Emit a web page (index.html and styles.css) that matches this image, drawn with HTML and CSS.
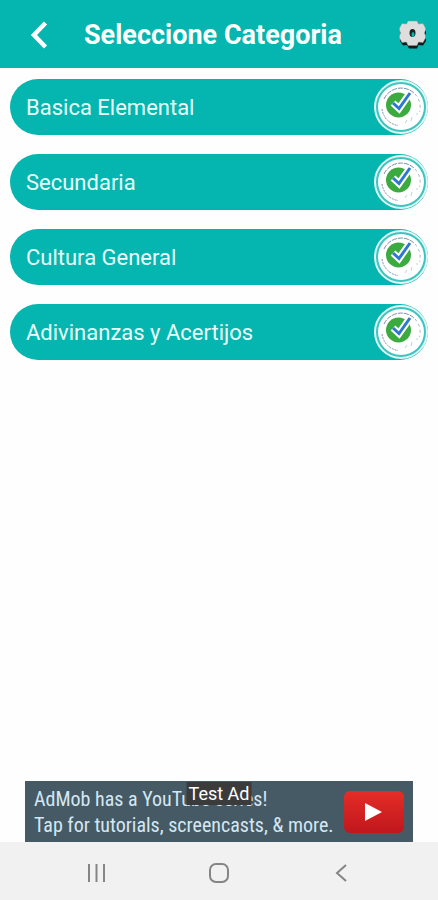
FILE: index.html
```html
<!DOCTYPE html>
<html lang="es">
<head>
    <meta charset="UTF-8">
    <meta name="viewport" content="width=device-width, initial-scale=1.0">
    <title>Seleccione Categoria</title>
    <link rel="stylesheet" href="styles.css">
</head>
<body>
    <svg class="sprite" aria-hidden="true">
        <symbol id="check" viewBox="0 0 54 54">
            <circle cx="27" cy="27" r="26" fill="#3fc4bf" stroke="#dff7f5" stroke-width="2"/>
            <circle cx="27" cy="27" r="23" fill="#fff"/>
            <g fill="none" stroke="#7d8fa6" stroke-width="1">
                <path d="M10 19A19 19 0 0 1 40 13" stroke-dasharray="5 1"/>
                <path d="M8 29A19 19 0 0 0 24 45.500" stroke-dasharray="2 1"/>
                <path d="M41 14A19 19 0 0 1 45.500 32" stroke="#a9b8c4" stroke-dasharray="3 3"/>
                <path d="M31 43L33 40M37 41L38 37M42 34H44" stroke="#b9d6d3"/>
            </g>
            <circle cx="24.500" cy="25" r="12.500" fill="#3cab3f"/>
            <path d="M19 23L25 28.500L36 13" fill="none" stroke="#fff" stroke-width="7"/>
            <path d="M19 23L25 28.500L36 13" fill="none" stroke="#2f78d2" stroke-width="3"/>
        </symbol>
    </svg>

    <div class="app">
        <header class="header">
            <button class="icon-button" type="button" aria-label="Volver">
                <svg width="18" height="28" viewBox="0 0 18 28">
                    <path d="M15.500 2L4 14L15.500 26" fill="none" stroke="#fff" stroke-width="4.500"/>
                </svg>
            </button>
            <h1>Seleccione Categoria</h1>
            <button class="icon-button" type="button" aria-label="Ajustes">
                <svg width="28" height="30" viewBox="0 0 28 30">
                    <path d="M9 4H18L19.500 7L24 6.500L27 11V13L26 16L27 19V21L24 25.500L19.500 25L18 28.500H10L8 25L4 25.500L1 21V19L2 16L1 13V11L4 6.500L8 7Z" fill="#151b1b"/>
                    <path d="M9 1H18L19.500 4L24 3.500L26.500 8V10L25.500 13L26.500 16V18L24 22.500L19.500 22L18 25.500H9L7.500 22L3 22.500L0.500 18V16L1.500 13L0.500 10V8L3 3.500L7.500 4Z" fill="#dedede" stroke="#8a9a99" stroke-width="0.500" stroke-linejoin="round"/>
                    <ellipse cx="13.500" cy="13" rx="3" ry="4" fill="#1d2423"/>
                    <ellipse cx="14" cy="14.500" rx="1.500" ry="2.500" fill="#05b5af"/>
                </svg>
            </button>
        </header>

        <main class="categories">
            <button class="category" type="button">
                <span>Basica Elemental</span>
                <svg class="check"><use href="#check"/></svg>
            </button>
            <button class="category" type="button">
                <span>Secundaria</span>
                <svg class="check"><use href="#check"/></svg>
            </button>
            <button class="category" type="button">
                <span>Cultura General</span>
                <svg class="check"><use href="#check"/></svg>
            </button>
            <button class="category" type="button">
                <span>Adivinanzas y Acertijos</span>
                <svg class="check"><use href="#check"/></svg>
            </button>
        </main>

        <a class="ad" href="#">
            <span class="ad-text">AdMob has a YouTube series!<br>Tap for tutorials, screencasts, &amp; more.</span>
            <span class="ad-play">
                <svg width="18" height="20" viewBox="0 0 18 20"><path d="M0 1L17 10L0 19Z" fill="#fff"/></svg>
            </span>
            <span class="ad-label">Test Ad</span>
        </a>

        <nav class="navbar">
            <button type="button" aria-label="Recientes">
                <svg width="20" height="20" viewBox="0 0 20 20"><path d="M2 1V19M9.500 1V19M17 1V19" fill="none" stroke="#858585" stroke-width="2"/></svg>
            </button>
            <button type="button" aria-label="Inicio">
                <svg width="20" height="20" viewBox="0 0 20 20"><rect x="1" y="1" width="18" height="18" rx="6" fill="none" stroke="#858585" stroke-width="2"/></svg>
            </button>
            <button type="button" aria-label="Volver">
                <svg width="20" height="20" viewBox="0 0 20 20"><path d="M15 2L6 10L15 18" fill="none" stroke="#858585" stroke-width="2"/></svg>
            </button>
        </nav>
    </div>
</body>
</html>
```
FILE: styles.css
```css
* {
    box-sizing: border-box;
}

body {
    margin: 0;
    background-color: #fefefe;
    font-family: Roboto, "Liberation Sans", sans-serif;
}

button {
    padding: 0;
    border: none;
    background: none;
    color: inherit;
    font: inherit;
    cursor: pointer;
}

svg {
    display: block;
}

.sprite {
    display: none;
}

.app {
    display: flex;
    flex-direction: column;
    min-height: 100vh;
}

.header {
    display: flex;
    align-items: center;
    gap: 30px;
    height: 68px;
    padding: 2px 10px 0 24px;
    background-color: #05b5af;
    color: #fff;
}

.header h1 {
    flex: 1;
    margin: 0;
    font-size: 27px;
    font-weight: 700;
    white-space: nowrap;
}

.icon-button {
    display: flex;
    flex: none;
    justify-content: center;
    width: 30px;
}

.categories {
    display: flex;
    flex: 1;
    flex-direction: column;
    gap: 19px;
    padding: 11px 10px;
}

.category {
    display: flex;
    align-items: center;
    justify-content: space-between;
    height: 56px;
    padding-left: 16px;
    border-radius: 28px;
    background-color: #05b5af;
    color: #e8fffc;
    font-size: 22px;
}

.check {
    width: 54px;
    height: 54px;
}

.ad {
    position: relative;
    display: flex;
    align-items: center;
    justify-content: space-between;
    height: 61px;
    margin: 0 25px;
    padding: 0 9px;
    background-color: #455a64;
    color: #d5e7f3;
    text-decoration: none;
}

.ad-text {
    font-family: "Roboto Condensed", Roboto, "Liberation Sans", sans-serif;
    font-size: 20px;
    line-height: 26px;
    white-space: nowrap;
}

.ad-play {
    display: flex;
    flex: none;
    align-items: center;
    justify-content: center;
    width: 60px;
    height: 42px;
    border-radius: 6px;
    background-image: linear-gradient(#e52d27, #bf171d);
}

.ad-label {
    position: absolute;
    top: 1px;
    left: 50%;
    transform: translateX(-50%);
    padding: 0 2px;
    background-color: #3b3b3b;
    color: #fff;
    font-size: 18px;
    line-height: 23px;
    white-space: nowrap;
}

.navbar {
    display: flex;
    align-items: center;
    justify-content: center;
    gap: 102px;
    height: 58px;
    padding-top: 4px;
    background-color: #f1f1f1;
}
```
